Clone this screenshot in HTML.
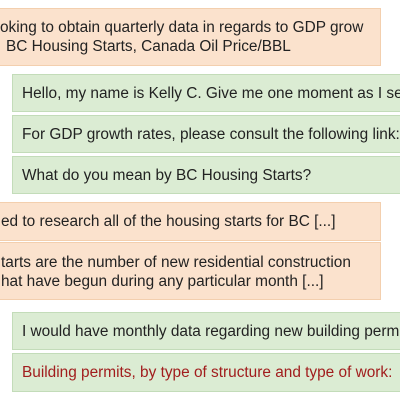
<!DOCTYPE html>
<html><head><style>
body{margin:0;width:400px;height:400px;overflow:hidden;background:#fff;font-family:"Liberation Sans",sans-serif;font-size:15.4px;color:#222;position:relative}
.b{position:absolute;box-sizing:border-box;white-space:nowrap;overflow:hidden}
.o{background:#fbe2cd;border:1px solid #f3cfae;left:-2px;width:383px}
.g{background:#dbecd3;border:1px solid #c3dcb9;left:12px;width:400px}
.t{position:absolute;line-height:19px}
</style></head><body>
<div class="b o" style="top:8px;height:58px"><div class="t" style="left:1px;top:9px">oking to obtain quarterly data in regards to GDP grow<br><span style="margin-left:6px">BC Housing Starts, Canada Oil Price/BBL</span></div></div>
<div class="b g" style="top:74px;height:38px"><div class="t" style="left:9px;top:9px">Hello, my name is Kelly C. Give me one moment as I search</div></div>
<div class="b g" style="top:115px;height:38px"><div class="t" style="left:9px;top:9px">For GDP growth rates, please consult the following link:</div></div>
<div class="b g" style="top:156px;height:38px"><div class="t" style="left:9px;top:9px">What do you mean by BC Housing Starts?</div></div>
<div class="b o" style="top:202px;height:39px"><div class="t" style="left:2px;top:9px">ed to research all of the housing starts for BC [...]</div></div>
<div class="b o" style="top:242px;height:58px"><div class="t" style="left:2px;top:10px">tarts are the number of new residential construction<br>hat have begun during any particular month [...]</div></div>
<div class="b g" style="top:312px;height:38px"><div class="t" style="left:9px;top:9px">I would have monthly data regarding new building permits</div></div>
<div class="b g" style="top:353px;height:39px"><div class="t" style="left:9px;top:9px;color:#a11d1d">Building permits, by type of structure and type of work:</div></div>
</body></html>
